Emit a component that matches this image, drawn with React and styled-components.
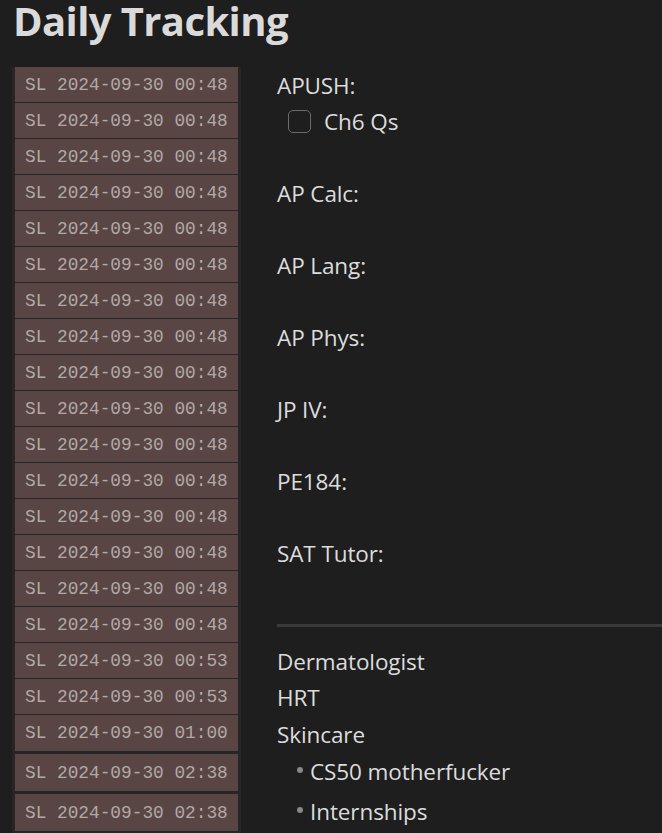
import React from 'react';
import styled, { createGlobalStyle } from 'styled-components';

const GlobalStyle = createGlobalStyle`
  html, body {
    margin: 0;
    padding: 0;
    background: #1e1e1e;
    overflow: hidden;
  }
  body {
    font-family: "Open Sans", "Noto Sans", sans-serif;
    color: #dcdcdc;
  }
`;

const Page = styled.div`
  padding: 0 0 0 13px;
  height: 833px;
  overflow: hidden;
`;

const Title = styled.h1`
  margin: -6px 0 0;
  height: 73px;
  font-size: 40px;
  font-weight: 700;
  letter-spacing: -0.6px;
  color: #dadada;
  line-height: 54px;
`;

const Board = styled.div`
  display: grid;
  grid-template-columns: 229px 1fr;
  column-gap: 36px;
  margin-left: -1px;
`;

const Stamp = styled.div`
  background: #262626;
  padding: 0 3px ${p => (p.$gap ? p.$gap : 1)}px;
  box-sizing: border-box;
  height: ${p => p.$h}px;
`;

const StampCell = styled.div`
  height: 100%;
  background: #5a4545;
  color: #b0a9a4;
  font-family: "Liberation Mono", "Courier New", monospace;
  font-size: 17.8px;
  display: flex;
  align-items: center;
  padding-left: 10px;
  white-space: nowrap;
`;

const Line = styled.div`
  height: ${p => p.$h}px;
  box-sizing: border-box;
  display: flex;
  align-items: center;
  font-size: 22.5px;
  letter-spacing: -0.1px;
  padding-left: ${p => (p.$indent ? p.$indent : 0)}px;
  padding-bottom: ${p => (p.$lift ? p.$lift : 0)}px;
  white-space: nowrap;
  margin-right: -40px;
`;

const Box = styled.span`
  width: 21px;
  height: 21px;
  border: 1px solid #6b6b6b;
  border-radius: 5px;
  margin-right: 13px;
  flex-shrink: 0;
`;

const Dot = styled.span`
  width: 6px;
  height: 6px;
  border-radius: 50%;
  background: #888;
  margin-right: 7px;
  margin-top: -3px;
  flex-shrink: 0;
`;

const Rule = styled.hr`
  width: 100%;
  border: none;
  border-top: 3px solid #3a3a3a;
  margin: 0;
`;

const rows = [
  { time: '00:48', kind: 'text', text: 'APUSH:' },
  { time: '00:48', kind: 'check', text: 'Ch6 Qs' },
  { time: '00:48' },
  { time: '00:48', kind: 'text', text: 'AP Calc:' },
  { time: '00:48' },
  { time: '00:48', kind: 'text', text: 'AP Lang:' },
  { time: '00:48' },
  { time: '00:48', kind: 'text', text: 'AP Phys:' },
  { time: '00:48' },
  { time: '00:48', kind: 'text', text: 'JP IV:' },
  { time: '00:48' },
  { time: '00:48', kind: 'text', text: 'PE184:' },
  { time: '00:48' },
  { time: '00:48', kind: 'text', text: 'SAT Tutor:' },
  { time: '00:48' },
  { time: '00:48', kind: 'rule' },
  { time: '00:53', kind: 'text', text: 'Dermatologist' },
  { time: '00:53', kind: 'text', text: 'HRT' },
  { time: '01:00', kind: 'text', text: 'Skincare', gap: 3, h: 39 },
  { time: '02:38', kind: 'bullet', text: 'CS50 motherfucker', gap: 3, h: 40 },
  { time: '02:38', kind: 'bullet', text: 'Internships', gap: 3, h: 40 },
];

function Content({ row, h }) {
  switch (row.kind) {
    case 'text':
      return <Line $h={h}>{row.text}</Line>;
    case 'check':
      return <Line $h={h} $indent={11}><Box />{row.text}</Line>;
    case 'bullet':
      return <Line $h={h} $indent={20} $lift={6}><Dot />{row.text}</Line>;
    case 'rule':
      return <Line $h={h}><Rule /></Line>;
    default:
      return <Line $h={h} />;
  }
}

export default function App() {
  return (
    <Page>
      <GlobalStyle />
      <Title>Daily Tracking</Title>
      <Board>
        {rows.map((row, i) => {
          const h = row.h || 36;
          return (
            <React.Fragment key={i}>
              <Stamp $h={h} $gap={row.gap}>
                <StampCell>SL 2024-09-30 {row.time}</StampCell>
              </Stamp>
              <Content row={row} h={h} />
            </React.Fragment>
          );
        })}
      </Board>
    </Page>
  );
}
